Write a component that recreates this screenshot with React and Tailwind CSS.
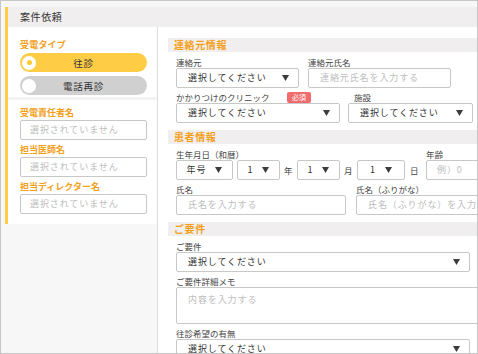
import React from "react";

const ORANGE = "text-[#f5a01a]";

function Arrow() {
  return (
    <svg width="7" height="6" viewBox="0 0 7 6" className="shrink-0">
      <polygon points="0,0 7,0 3.5,6" fill="#3c3c3c" />
    </svg>
  );
}

function Label({ children, className = "" }) {
  return (
    <div className={`h-[12px] flex items-center text-[8.5px] leading-[12px] text-[#444] whitespace-nowrap ${className}`}>
      {children}
    </div>
  );
}

function SectionHeader({ children }) {
  return (
    <div className={`h-[14px] ml-[10px] bg-[#f0eeee] flex items-center pl-[6px] text-[10px] leading-[14px] font-bold tracking-[0.6px] ${ORANGE}`}>
      {children}
    </div>
  );
}

function SelectBox({ className = "", text = "選択してください" }) {
  return (
    <div className={`h-[20px] border border-[#c8c8c8] rounded-[2px] bg-white flex items-center justify-between pl-[11px] pr-[9px] ${className}`}>
      <span className="text-[9px] leading-[12px] tracking-[0.9px] text-[#333] whitespace-nowrap">{text}</span>
      <Arrow />
    </div>
  );
}

function SmallSelect({ className = "", text }) {
  return (
    <div className={`h-[20px] border border-[#c8c8c8] rounded-[2px] bg-white flex items-center justify-center gap-[9px] ${className}`}>
      <span className="text-[9px] leading-[12px] tracking-[0.9px] text-[#333] whitespace-nowrap">{text}</span>
      <Arrow />
    </div>
  );
}

function InputBox({ className = "", placeholder, pl = "pl-[11px]" }) {
  return (
    <div className={`h-[20px] border border-[#c8c8c8] rounded-[2px] bg-white flex items-center ${pl} overflow-hidden ${className}`}>
      <span className="text-[9px] leading-[12px] tracking-[0.9px] text-[#bdbdbd] whitespace-nowrap">{placeholder}</span>
    </div>
  );
}

function Unit({ children }) {
  return <div className="w-[8px] text-center text-[8.5px] leading-[12px] text-[#444]">{children}</div>;
}

export default function App() {
  return (
    <div className="w-[478px] h-[354px] overflow-hidden border border-[#c6c6c6] bg-[#f7f7f7] font-['Noto_Sans_CJK_JP',sans-serif] flex flex-col pt-[6px] pl-[4px]">
      {/* Title bar */}
      <div className="flex h-[20px] shrink-0">
        <div className="w-[3px] bg-[#ffcc44]" />
        <div className="flex-1 bg-[#f0eeee] flex items-center pl-[12px] text-[10px] leading-[12px] tracking-[0.6px] text-[#333]">
          案件依頼
        </div>
      </div>

      {/* Body */}
      <div className="flex flex-1 min-h-0">
        {/* Left column */}
        <div className="w-[152px] shrink-0 self-start border-l-[3px] border-[#ffcc44] flex flex-col bg-[#f3f3f3]">
          <div className="bg-white h-[70px] pl-[12px] pr-[10px] pt-[12px]">
            <div className={`h-[12px] flex items-center text-[9px] leading-[12px] font-bold tracking-[0.2px] ${ORANGE}`}>受電タイプ</div>
            <div className="mt-[2px] h-[19px] rounded-full bg-[#ffcd45] flex items-center">
              <div className="ml-[2px] w-[14px] h-[14px] rounded-full bg-white flex items-center justify-center">
                <div className="w-[5px] h-[5px] rounded-full bg-[#ffc933]" />
              </div>
              <span className="flex-1 text-center mr-[16px] text-[9.5px] leading-[12px] tracking-[0.8px] text-[#333]">往診</span>
            </div>
            <div className="mt-[4px] h-[19px] rounded-full bg-[#d0d0d0] flex items-center">
              <div className="ml-[2px] w-[14px] h-[14px] rounded-full bg-white" />
              <span className="flex-1 text-center mr-[16px] text-[9.5px] leading-[12px] tracking-[0.8px] text-[#333]">電話再診</span>
            </div>
          </div>
          <div className="h-[3px]" />
          <div className="bg-white h-[124px] pl-[12px] pr-[10px] pt-[7px]">
            <div className={`h-[12px] flex items-center text-[9px] leading-[12px] font-bold ${ORANGE}`}>受電責任者名</div>
            <InputBox className="mt-[1px]" pl="pl-[9px]" placeholder="選択されていません" />
            <div className={`mt-[4px] h-[12px] flex items-center text-[9px] leading-[12px] font-bold ${ORANGE}`}>担当医師名</div>
            <InputBox className="mt-[1px]" pl="pl-[9px]" placeholder="選択されていません" />
            <div className={`mt-[4px] h-[12px] flex items-center text-[9px] leading-[12px] font-bold ${ORANGE}`}>担当ディレクター名</div>
            <InputBox className="mt-[1px]" pl="pl-[9px]" placeholder="選択されていません" />
          </div>
        </div>

        {/* Right panel */}
        <div className="flex-1 min-w-0 bg-white border-l border-[#dddddd] overflow-hidden pt-[11px]">
          <SectionHeader>連絡元情報</SectionHeader>
          <div className="pl-[18px] pt-[4px]">
            <div className="flex">
              <div className="w-[123px] shrink-0">
                <Label>連絡元</Label>
                <SelectBox />
              </div>
              <div className="ml-[9px] w-[143px] shrink-0">
                <Label>連絡元氏名</Label>
                <InputBox placeholder="連絡元氏名を入力する" />
              </div>
            </div>
            <div className="flex mt-[3px]">
              <div className="w-[164px] shrink-0">
                <div className="w-[135px] flex items-center justify-between h-[12px]">
                  <span className="text-[8.5px] leading-[12px] text-[#444] whitespace-nowrap">かかりつけのクリニック</span>
                  <span className="h-[11px] w-[24px] rounded-[2px] bg-[#f06b6b] text-white text-[7px] leading-[11px] flex items-center justify-center">必須</span>
                </div>
                <SelectBox />
              </div>
              <div className="ml-[8px] w-[125px] shrink-0">
                <Label className="pl-[6px]">施設</Label>
                <SelectBox />
              </div>
            </div>
          </div>

          <div className="mt-[7px]">
            <SectionHeader>患者情報</SectionHeader>
          </div>
          <div className="pl-[18px] pt-[4px]">
            <div className="flex">
              <div className="shrink-0">
                <Label>生年月日（和暦）</Label>
                <div className="flex items-center">
                  <SmallSelect className="w-[57px]" text="年号" />
                  <SmallSelect className="ml-[4px] w-[43px]" text="1" />
                  <div className="ml-[4px]"><Unit>年</Unit></div>
                  <SmallSelect className="ml-[5px] w-[43px]" text="1" />
                  <div className="ml-[4px]"><Unit>月</Unit></div>
                  <SmallSelect className="ml-[5px] w-[48px]" text="1" />
                  <div className="ml-[5px]"><Unit>日</Unit></div>
                </div>
              </div>
              <div className="ml-[8px] w-[70px] shrink-0">
                <Label>年齢</Label>
                <InputBox pl="pl-[10px]" placeholder="例）0" />
              </div>
            </div>
            <div className="flex mt-[3px]">
              <div className="w-[170px] shrink-0">
                <Label>氏名</Label>
                <InputBox placeholder="氏名を入力する" />
              </div>
              <div className="ml-[10px] w-[140px] shrink-0">
                <Label>氏名（ふりがな）</Label>
                <InputBox placeholder="氏名（ふりがな）を入力する" />
              </div>
            </div>
          </div>

          <div className="mt-[7px]">
            <SectionHeader>ご要件</SectionHeader>
          </div>
          <div className="pl-[18px] pt-[4px]">
            <Label>ご要件</Label>
            <SelectBox className="w-[294px]" />
            <Label className="mt-[3px]">ご要件詳細メモ</Label>
            <div className="w-[310px] h-[37px] border border-[#c8c8c8] rounded-[2px] pl-[11px] pt-[6px]">
              <div className="text-[9px] leading-[12px] tracking-[0.9px] text-[#bdbdbd] whitespace-nowrap">内容を入力する</div>
            </div>
            <Label className="mt-[3px]">往診希望の有無</Label>
            <SelectBox className="w-[294px]" />
          </div>
        </div>
      </div>
    </div>
  );
}
